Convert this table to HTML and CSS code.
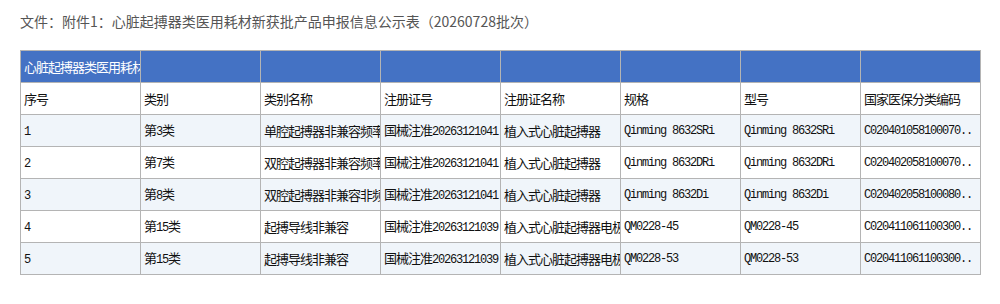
FILE: index.html
```html
<!DOCTYPE html>
<html lang="zh">
<head>
<meta charset="utf-8">
<title>附件1</title>
<link rel="stylesheet" href="styles.css">
</head>
<body>
<div class="page">
  <div class="file-title">文件：附件1：心脏起搏器类医用耗材新获批产品申报信息公示表（20260728批次）</div>
  <table class="grid">
    <colgroup>
      <col class="c"><col class="c"><col class="c"><col class="c"><col class="c"><col class="c"><col class="c"><col class="c">
    </colgroup>
    <tr class="band">
      <td>心脏起搏器类医用耗材新获批产品申报信息公示表</td><td></td><td></td><td></td><td></td><td></td><td></td><td></td>
    </tr>
    <tr class="head">
      <td>序号</td><td>类别</td><td>类别名称</td><td>注册证号</td><td>注册证名称</td><td>规格</td><td>型号</td><td>国家医保分类编码</td>
    </tr>
    <tr class="alt">
      <td><span class="n">1</span></td><td>第<span class="n">3</span>类</td><td>单腔起搏器非兼容频率应答</td><td>国械注准<span class="n">20263121041</span></td><td>植入式心脏起搏器</td><td class="m">Qinming 8632SRi</td><td class="m">Qinming 8632SRi</td><td class="m">C020401058100070..</td>
    </tr>
    <tr>
      <td><span class="n">2</span></td><td>第<span class="n">7</span>类</td><td>双腔起搏器非兼容频率应答</td><td>国械注准<span class="n">20263121041</span></td><td>植入式心脏起搏器</td><td class="m">Qinming 8632DRi</td><td class="m">Qinming 8632DRi</td><td class="m">C020402058100070..</td>
    </tr>
    <tr class="alt">
      <td><span class="n">3</span></td><td>第<span class="n">8</span>类</td><td>双腔起搏器非兼容非频率应答</td><td>国械注准<span class="n">20263121041</span></td><td>植入式心脏起搏器</td><td class="m">Qinming 8632Di</td><td class="m">Qinming 8632Di</td><td class="m">C020402058100080..</td>
    </tr>
    <tr>
      <td><span class="n">4</span></td><td>第<span class="n">15</span>类</td><td>起搏导线非兼容</td><td>国械注准<span class="n">20263121039</span></td><td>植入式心脏起搏器电极导线</td><td class="m">QM0228-45</td><td class="m">QM0228-45</td><td class="m">C020411061100300..</td>
    </tr>
    <tr class="alt">
      <td><span class="n">5</span></td><td>第<span class="n">15</span>类</td><td>起搏导线非兼容</td><td>国械注准<span class="n">20263121039</span></td><td>植入式心脏起搏器电极导线</td><td class="m">QM0228-53</td><td class="m">QM0228-53</td><td class="m">C020411061100300..</td>
    </tr>
  </table>
</div>
</body>
</html>
```

FILE: styles.css
```css
html, body {
  margin: 0;
  padding: 0;
  background: #ffffff;
}

.page {
  padding: 10px 20px 0 20px;
  font-family: "Noto Sans CJK SC", "Liberation Sans", sans-serif;
}

.file-title {
  font-size: 14px;
  line-height: 22px;
  color: #555555;
  margin-bottom: 18px;
  white-space: nowrap;
}

.grid {
  border-collapse: collapse;
  table-layout: fixed;
  width: 960px;
  font-size: 13px;
  letter-spacing: -1px;
  color: #111111;
}

.grid .c {
  width: 120px;
}

.grid td {
  border: 1px solid #b4b4b4;
  height: 31px;
  padding: 0 0 0 3px;
  white-space: nowrap;
  overflow: hidden;
  vertical-align: middle;
  box-sizing: border-box;
  line-height: 16px;
}

.grid tr {
  height: 32px;
}

.band td {
  background: #4472c4;
  color: #ffffff;
}

.head td {
  background: #ffffff;
}

.alt td {
  background: #f0f5fa;
}

.n, .m {
  font-family: "Liberation Mono", monospace;
  font-size: 12px;
  letter-spacing: -1.2px;
}
```
